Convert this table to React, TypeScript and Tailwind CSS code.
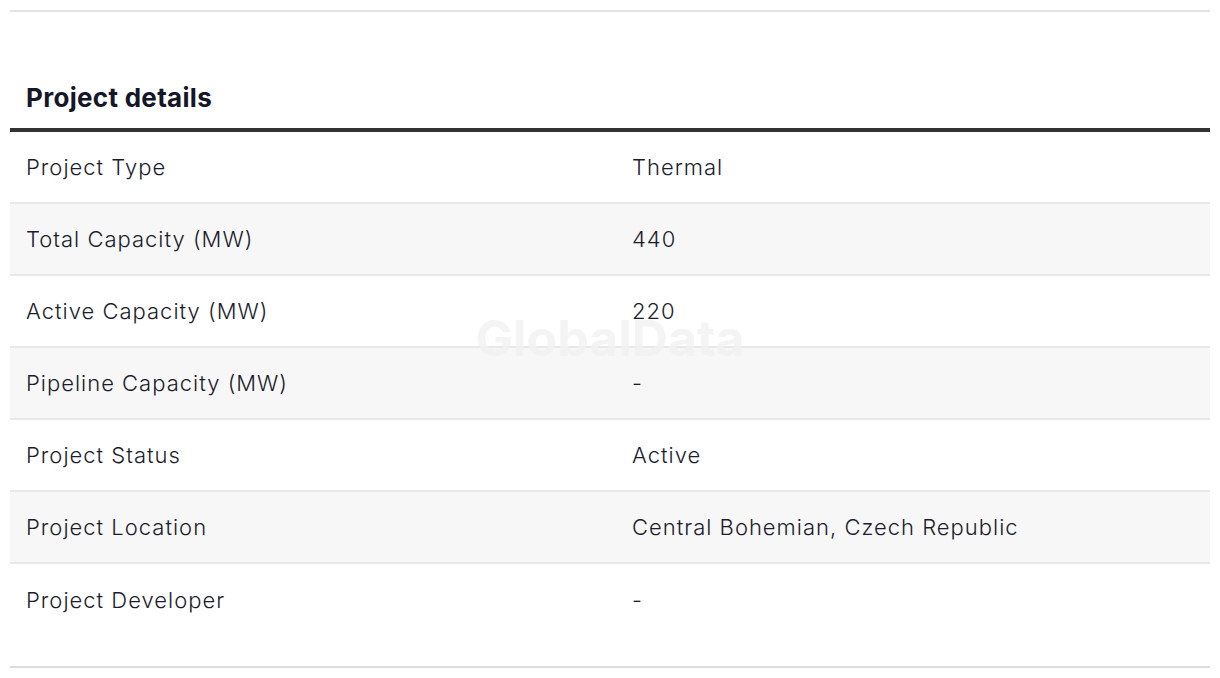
import React from "react";

interface DetailRow {
  label: string;
  value: string;
}

const rows: DetailRow[] = [
  { label: "Project Type", value: "Thermal" },
  { label: "Total Capacity (MW)", value: "440" },
  { label: "Active Capacity (MW)", value: "220" },
  { label: "Pipeline Capacity (MW)", value: "-" },
  { label: "Project Status", value: "Active" },
  { label: "Project Location", value: "Central Bohemian, Czech Republic" },
  { label: "Project Developer", value: "-" },
];

const App: React.FC = () => {
  return (
    <div className="min-h-[678px] bg-white px-[10px] pt-[10px] font-['Inter','Liberation_Sans',sans-serif] text-[#1c1c2e]">
      <div className="border-t-2 border-[#e2e2e2]" />
      <h2 className="pl-4 pt-[68px] pb-[12px] text-[26px] font-bold leading-[36px] tracking-[0.3px] text-[#161629]">
        Project details
      </h2>
      <div className="relative border-t-4 border-[#333333]">
        {rows.map((row, i) => (
          <div
            key={row.label}
            className={`grid grid-cols-[606px_1fr] h-[72px] items-center text-[22px] font-light tracking-[1px] ${
              i % 2 === 1 ? "bg-[#f7f7f7]" : "bg-white"
            } ${i < rows.length - 1 ? "border-b-2 border-[#e8e8e8]" : ""}`}
          >
            <span className="pl-4">{row.label}</span>
            <span className="pl-4">{row.value}</span>
          </div>
        ))}
        <div className="pointer-events-none absolute left-0 right-0 top-[176px] flex justify-center">
          <span className="text-[50px] font-bold leading-[60px] text-[#f2f2f2] opacity-80">GlobalData</span>
        </div>
      </div>
      <div className="mt-[30px] border-t-2 border-[#dcdcdc]" />
    </div>
  );
};

export default App;
